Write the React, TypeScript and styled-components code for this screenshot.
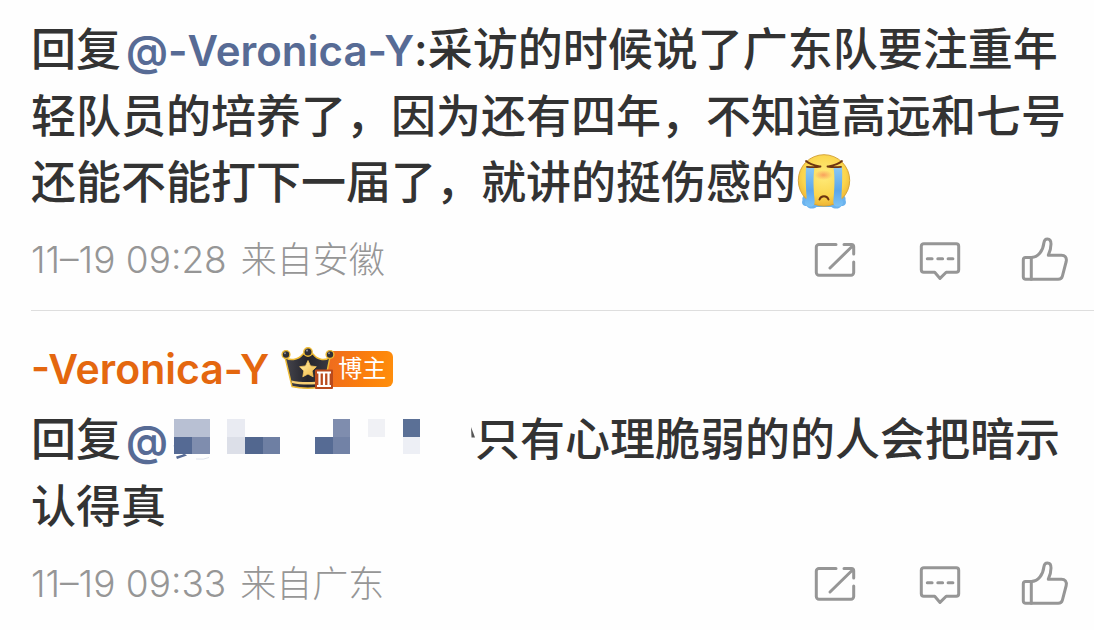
import React from 'react';
import styled, { createGlobalStyle } from 'styled-components';

const GlobalStyle = createGlobalStyle`
  body {
    margin: 0;
    background: #fefefe;
    font-family: Inter, "Noto Sans CJK SC", sans-serif;
    color: #333;
  }
`;

const Thread = styled.main`
  display: flex;
  flex-direction: column;
  padding-left: 31px;
`;

const Comment = styled.article<{ $divided?: boolean }>`
  padding: ${(p) => (p.$divided ? '34px 25px 20px 0' : '17px 25px 26px 0')};
  border-top: ${(p) => (p.$divided ? '1px solid #dedede' : 'none')};
`;

const Author = styled.header`
  display: flex;
  align-items: center;
  gap: 12px;
  height: 48px;
  margin-bottom: 14px;
`;

const AuthorLink = styled.a`
  color: #e4670f;
  font-size: 41px;
  font-weight: 600;
  line-height: 48px;
  text-decoration: none;
`;

const Badge = styled.span`
  display: flex;
  align-items: center;
`;

const BadgeLabel = styled.span`
  box-sizing: border-box;
  height: 36px;
  margin-left: -8px;
  padding: 0 7px 0 11px;
  border-radius: 0 6px 6px 0;
  background: linear-gradient(100deg, #ee6a20, #fb7f0c 60%, #ff8f0c);
  color: #fff;
  font-size: 24px;
  line-height: 36px;
`;

const CrownArt = styled.svg`
  position: relative;
  display: block;
  flex: none;
`;

const Body = styled.p`
  margin: 0;
  font-size: 45px;
  font-weight: 500;
  line-height: 66px;
`;

const Mention = styled.a`
  margin-left: 5px;
  color: #576b95;
  font-size: 42px;
  font-weight: 600;
  text-decoration: none;
`;

const EmojiArt = styled.svg`
  display: inline-block;
  vertical-align: -11px;
`;

const MaskArt = styled.svg`
  display: inline-block;
  vertical-align: -4px;
`;

const Footer = styled.footer`
  display: flex;
  align-items: center;
  justify-content: space-between;
  margin-top: 20px;
`;

const Meta = styled.div`
  display: flex;
  gap: 14px;
  color: #969696;
  font-size: 36px;
  font-weight: 300;
  line-height: 48px;
`;

const Time = styled.time`
  font-size: 37px;
`;

const Actions = styled.div`
  display: flex;
  gap: 57px;
`;

const IconButton = styled.button`
  display: block;
  padding: 0;
  border: 0;
  background: none;
  color: #969696;
  cursor: pointer;

  svg {
    display: block;
  }
`;

const stroke = {
  width: 48,
  height: 48,
  viewBox: '0 0 48 48',
  fill: 'none',
  stroke: 'currentColor',
  strokeWidth: 3,
  strokeLinecap: 'round' as const,
  strokeLinejoin: 'round' as const,
};

const ShareIcon = () => (
  <svg {...stroke}>
    <path d="M25 8.4H8a2.7 2.7 0 0 0-2.7 2.7v25.5A2.7 2.7 0 0 0 8 39.3h32a2.7 2.7 0 0 0 2.7-2.7V26" />
    <path d="M33 8.4h7.4a2.3 2.3 0 0 1 2.3 2.3V18M41.5 10 19 32" />
  </svg>
);

const CommentIcon = () => (
  <svg {...stroke}>
    <path d="M7.8 7.7h32.4a2.5 2.5 0 0 1 2.5 2.5v23.6a2.5 2.5 0 0 1-2.5 2.5h-10L24 42.4l-5.3-6.1H7.8a2.5 2.5 0 0 1-2.5-2.5V10.2a2.5 2.5 0 0 1 2.5-2.5z" />
    <path d="M11.3 22.7h4.8M21.8 22.7h4.8M32.1 22.7h4.8" />
  </svg>
);

const LikeIcon = () => (
  <svg {...stroke}>
    <path d="M10.3 21.4H4.6a2.3 2.3 0 0 0-2.3 2.3V41a2.3 2.3 0 0 0 2.3 2.3h32.6c2.4 0 3.6-1 4.2-3.2l3.8-14.6c.8-3.8-1.2-6.3-4.8-6.3H27.3c1.5-3.2 2.7-7 2.7-11.2C30 4.6 28.6 3 26.5 3c-2.2 0-3.3 1.4-3.6 3.8C22.1 14.5 17.3 21.4 10.3 21.4z" />
    <path d="M10.3 21.4v21.9" />
  </svg>
);

const CryingFace = () => (
  <EmojiArt width="56" height="56" viewBox="-2 0 56 56" role="img" aria-label="crying">
    <defs>
      <radialGradient id="skin" cx=".5" cy=".4" r=".6">
        <stop offset="0" stopColor="#ffec7c" />
        <stop offset=".7" stopColor="#fbd54c" />
        <stop offset="1" stopColor="#eeb332" />
      </radialGradient>
      <radialGradient id="blush">
        <stop offset="0" stopColor="#f89455" stopOpacity=".85" />
        <stop offset="1" stopColor="#f89455" stopOpacity="0" />
      </radialGradient>
      <linearGradient id="tear" x1="0" y1="0" x2="0" y2="1">
        <stop offset="0" stopColor="#8bc9f4" />
        <stop offset=".6" stopColor="#5ba6ec" />
        <stop offset="1" stopColor="#7cc3f5" />
      </linearGradient>
    </defs>
    <path d="M9 40c-4 1-5 4-4.500 6-1.500 4 1 6 4 6 2 3 7 3.500 10 1h15c3 2.500 8 2 10-1 3 0 5.500-2 4-6 .5-2-.5-5-4.500-6z" fill="#6ab2ee" />
    <circle cx="26" cy="26.400" r="25.700" fill="url(#skin)" stroke="#d6a53a" strokeWidth="1" />
    <ellipse cx="25.500" cy="21" rx="9" ry="5" fill="url(#blush)" />
    <path d="M8 13h8.500c-1.500 10-1 23 0 32 .6 5-.5 7.500-4 7.500-4 0-6-2-5.500-5 1-2 1.800-3 1.500-5.500C8 34 7.500 22 8 13z" fill="url(#tear)" />
    <path d="M44 13h-8.500c1.500 10 1 23 0 32-.6 5 .5 7.500 4 7.500 4 0 6-2 5.500-5-1-2-1.800-3-1.500-5.500C44 34 44.500 22 44 13z" fill="url(#tear)" />
    <g fill="none" stroke="#6d3510" strokeWidth="1.800" strokeLinecap="round" strokeLinejoin="round">
      <path d="M8 7c4 3.800 9 4.500 14.500 5.500-5 .9-9 .8-13.500.3" />
      <path d="M44 7c-4 3.800-9 4.500-14.500 5.500 5 .9 9 .8 13.500.3" />
      <path d="M21.500 45.500c1.400-4.400 7.600-4.400 9 0" strokeWidth="2" />
    </g>
  </EmojiArt>
);

const Crown = () => (
  <CrownArt width="54" height="44" viewBox="0 0 54 44" aria-hidden="true">
    <defs>
      <linearGradient id="gold" x1="0" y1="0" x2="1" y2="1">
        <stop offset="0" stopColor="#fff3b0" />
        <stop offset="1" stopColor="#f2b43c" />
      </linearGradient>
      <linearGradient id="coal" x1="0" y1="0" x2="1" y2="0">
        <stop offset="0" stopColor="#46464e" />
        <stop offset=".5" stopColor="#25252c" />
        <stop offset="1" stopColor="#3a3a42" />
      </linearGradient>
    </defs>
    <g stroke="#eebb35" strokeWidth="1.400" strokeLinejoin="round">
      <path d="M4 10c4 4 13 3.500 18-3h10c5 6.500 13 7 17 3l-6 29.500c-9 2.400-23 2.400-32 0z" fill="url(#coal)" />
      <circle cx="5" cy="7.500" r="3.900" fill="#303036" />
      <circle cx="27" cy="5" r="4.200" fill="#303036" />
      <circle cx="49" cy="7.500" r="3.900" fill="#303036" />
    </g>
    <g fill="#8f8f96">
      <circle cx="4" cy="6.300" r="1" />
      <circle cx="26" cy="3.600" r="1.100" />
      <circle cx="48" cy="6.300" r="1" />
    </g>
    <path d="M10.500 33.500c9 2 22 2 33 0l-.6 2.600c-10 2-22 2-31.800 0z" fill="#f6cf73" />
    <path d="M27 13.500l2.500 5.400 5.800.8-4.200 4.200 1 5.900-5.100-2.800-5.200 2.800 1-5.900-4.200-4.200 5.900-.8z" fill="url(#gold)" stroke="#f2c45c" strokeWidth=".8" strokeLinejoin="round" />
    <rect x="34" y="22.500" width="18" height="19.500" rx="1" fill="#b94a1c" />
    <path d="M36 25.500h14M36 39h14M38.500 26v13M43 26v13M47.500 26v13" stroke="#fff" strokeWidth="2.200" fill="none" />
  </CrownArt>
);

const tiles: Array<[number, number, number, string]> = [
  [0, 0, 36, '#b8c0d3'],
  [0, 18, 18, '#556a94'],
  [18, 18, 18, '#7f8dae'],
  [53, 0, 18, '#e9ebf2'],
  [53, 18, 18, '#dcdfe8'],
  [71, 18, 18, '#52678f'],
  [89, 18, 17, '#6e7fa3'],
  [141, 18, 18, '#566b94'],
  [159, 0, 17, '#7f8dae'],
  [159, 18, 17, '#7282a6'],
  [194, 0, 17, '#f0f1f5'],
  [229, 0, 17, '#5b7096'],
  [229, 18, 17, '#edeff5'],
];

const MaskedName = () => (
  <MaskArt width="302" height="42" viewBox="-6 -1 302 42" role="img" aria-label="hidden name">
    {tiles.map(([x, y, w, fill]) => (
      <rect key={`${x}-${y}`} x={x} y={y} width={w} height={y === 0 ? 18 : 17} fill={fill} />
    ))}
    <path d="M-1 26l8 8.500 5 1-2 .5-7-4zM2 37.500l9-2.500 2 1.500-10 3.500z" fill="#576b95" />
    <path d="M22 40q8 1 13-1.500" fill="none" stroke="#dfe3ec" />
  </MaskArt>
);

const ClippedStroke = () => (
  <MaskArt width="5" height="42" viewBox="0 -1 5 42" aria-hidden="true">
    <path d="M1 8l4 10.500H1.500z" fill="#555" />
  </MaskArt>
);

const CommentFooter = ({ time, place }: { time: string; place: string }) => (
  <Footer>
    <Meta>
      <Time>{time}</Time>
      <span>来自{place}</span>
    </Meta>
    <Actions>
      <IconButton type="button" aria-label="转发">
        <ShareIcon />
      </IconButton>
      <IconButton type="button" aria-label="评论">
        <CommentIcon />
      </IconButton>
      <IconButton type="button" aria-label="赞">
        <LikeIcon />
      </IconButton>
    </Actions>
  </Footer>
);

export default function App() {
  return (
    <>
      <GlobalStyle />
      <Thread>
        <Comment>
          <Body>
            回复
            <Mention href="#veronica">@-Veronica-Y</Mention>
            :采访的时候说了广东队要注重年轻队员的培养了，因为还有四年，不知道高远和七号还能不能打下一届了，就讲的挺伤感的
            <CryingFace />
          </Body>
          <CommentFooter time="11–19 09:28" place="安徽" />
        </Comment>
        <Comment $divided>
          <Author>
            <AuthorLink href="#veronica">-Veronica-Y</AuthorLink>
            <Badge>
              <Crown />
              <BadgeLabel>博主</BadgeLabel>
            </Badge>
          </Author>
          <Body>
            回复
            <Mention href="#hidden">
              @<MaskedName />
            </Mention>
            <ClippedStroke />
            只有心理脆弱的的人会把暗示认得真
          </Body>
          <CommentFooter time="11–19 09:33" place="广东" />
        </Comment>
      </Thread>
    </>
  );
}
